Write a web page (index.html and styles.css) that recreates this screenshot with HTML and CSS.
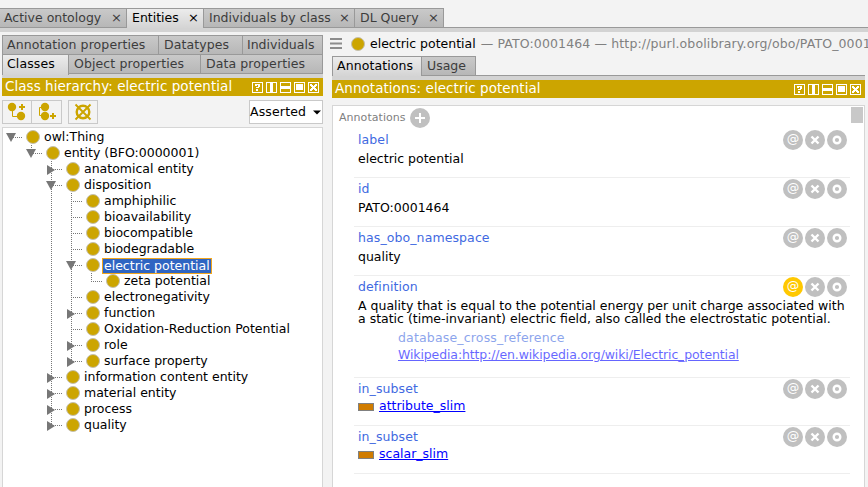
FILE: index.html
```html
<!DOCTYPE html>
<html lang="en">
<head>
<meta charset="utf-8">
<title>Class hierarchy</title>
<link rel="stylesheet" href="styles.css">
</head>
<body>
<svg class="defs" width="0" height="0" aria-hidden="true">
  <symbol id="ctl" viewBox="0 0 67 11">
    <g fill="none" stroke="#fff" shape-rendering="crispEdges">
      <path d="M.5.5h10v10H.5zM14.5.5h10v10h-10zM28.5.5h10v10h-10zM42.5.5h10v10h-10zM56.5.5h10v10h-10z"/>
    </g>
    <g fill="#fff" shape-rendering="crispEdges"><path d="M3 2h5v3H7v1H4V5h2V3H5v1H3zM4 7h2v2H4zM18 1h3v9h-3zM29 4h9v3h-9zM44 2h7v6h-7zM58 2h2v1h1v1h1V3h1V2h2v2h-1v1h-1v1h1v1h1v2h-2V8h-1V7h-1v1h-1v1h-2V7h1V6h1V5h-1V4h-1z"/></g>
  </symbol>
  <symbol id="down" viewBox="0 0 10 10"><path d="M0 0h10L5 9z" fill="#777"/></symbol>
  <symbol id="right" viewBox="0 0 10 10"><path d="M1 0l8 5-8 5z" fill="#777"/></symbol>
  <symbol id="ops" viewBox="0 0 64 20">
    <circle class="at" cx="10" cy="10" r="10"/><circle cx="32" cy="10" r="10" fill="#c0c0c0"/><circle cx="54" cy="10" r="10" fill="#c0c0c0"/>
    <path d="M28.5 6.5l7 7m0-7l-7 7" stroke="#fff" stroke-width="2.4"/>
    <circle cx="54" cy="10" r="3.3" fill="none" stroke="#fff" stroke-width="2.4"/>
  </symbol>
</svg>

<nav class="tabs main">
  <span class="tab w1">Active ontology<i>×</i></span><span class="tab on w2">Entities<i>×</i></span><span class="tab w3">Individuals by class<i>×</i></span><span class="tab w4">DL Query<i>×</i></span>
</nav>

<main>
  <section class="left">
    <div class="tabs r1"><span class="tab a1">Annotation properties</span><span class="tab a2">Datatypes</span><span class="tab a3">Individuals</span></div>
    <div class="tabs r2"><span class="tab on b1">Classes</span><span class="tab b2">Object properties</span><span class="tab b3">Data properties</span></div>
    <div class="title"><span>Class hierarchy: electric potential</span><svg width="67" height="11"><use href="#ctl"/></svg></div>
    <div class="tools">
      <span class="btn"><svg width="28" height="22"><g fill="#cca500"><circle cx="9" cy="6" r="4.2"/><circle cx="18" cy="15" r="4.2"/><path d="M16 5h2V3h2v2h2v2h-2v2h-2V7h-2z"/></g><path d="M9.5 10v5.5H14" fill="none" stroke="#cca500"/></svg></span>
      <span class="btn mid"><svg width="28" height="22"><g fill="#cca500"><circle cx="13" cy="6" r="4.2"/><circle cx="13" cy="15" r="4.2"/><path d="M18 14h2v-2h2v2h2v2h-2v2h-2v-2h-2z"/></g><path d="M10 6.500H7.500v8H10" fill="none" stroke="#cca500"/></svg></span>
      <span class="btn del"><svg width="28" height="22" fill="none" stroke="#cca500"><circle cx="14" cy="11" r="6.300" stroke-width="2.4"/><path d="M6.500 3.500l15 15m0-15l-15 15" stroke-width="1.900"/></svg></span>
      <span class="drop">Asserted<svg width="8" height="5"><path d="M0 .5h8L4 4.500z"/></svg></span>
    </div>
    <div class="tree">
      <ul>
        <li><div class="row"><svg class="h"><use href="#down"/></svg><b></b><span>owl:Thing</span></div>
        <ul>
          <li><div class="row"><svg class="h"><use href="#down"/></svg><b></b><span>entity (BFO:0000001)</span></div>
          <ul>
            <li><div class="row"><svg class="h"><use href="#right"/></svg><b></b><span>anatomical entity</span></div></li>
            <li><div class="row"><svg class="h"><use href="#down"/></svg><b></b><span>disposition</span></div>
            <ul>
              <li><div class="row"><b></b><span>amphiphilic</span></div></li>
              <li><div class="row"><b></b><span>bioavailability</span></div></li>
              <li><div class="row"><b></b><span>biocompatible</span></div></li>
              <li><div class="row"><b></b><span>biodegradable</span></div></li>
              <li><div class="row"><svg class="h"><use href="#down"/></svg><b></b><span class="sel">electric potential</span></div>
              <ul>
                <li><div class="row"><b></b><span>zeta potential</span></div></li>
              </ul></li>
              <li><div class="row"><b></b><span>electronegativity</span></div></li>
              <li><div class="row"><svg class="h"><use href="#right"/></svg><b></b><span>function</span></div></li>
              <li><div class="row"><b></b><span>Oxidation-Reduction Potential</span></div></li>
              <li><div class="row"><svg class="h"><use href="#right"/></svg><b></b><span>role</span></div></li>
              <li><div class="row"><svg class="h"><use href="#right"/></svg><b></b><span>surface property</span></div></li>
            </ul></li>
            <li><div class="row"><svg class="h"><use href="#right"/></svg><b></b><span>information content entity</span></div></li>
            <li><div class="row"><svg class="h"><use href="#right"/></svg><b></b><span>material entity</span></div></li>
            <li><div class="row"><svg class="h"><use href="#right"/></svg><b></b><span>process</span></div></li>
            <li><div class="row"><svg class="h"><use href="#right"/></svg><b></b><span>quality</span></div></li>
          </ul></li>
        </ul></li>
      </ul>
    </div>
  </section>

  <section class="right">
    <header><svg class="menu" width="12" height="11"><path d="M0 1h12M0 5.500h12M0 10h12" stroke="#8c8c8c" stroke-width="2"/></svg><b></b><span>electric potential</span><em>— PATO:0001464 — http://purl.obolibrary.org/obo/PATO_0001464</em></header>
    <div class="tabs r3"><span class="tab on c1">Annotations</span><span class="tab c2">Usage</span></div>
    <div class="title"><span>Annotations: electric potential</span><svg width="67" height="11"><use href="#ctl"/></svg></div>
    <div class="panel">
      <div class="content">
        <div class="head">Annotations<svg width="20" height="20"><circle cx="10" cy="10" r="10" fill="#c0c0c0"/><path d="M10 5v10M5 10h10" stroke="#fff" stroke-width="2"/></svg></div>
        <article><h3>label</h3><p>electric potential</p><div class="ops"><svg width="64" height="20"><use href="#ops"/></svg><span>@</span></div></article>
        <article><h3>id</h3><p>PATO:0001464</p><div class="ops"><svg width="64" height="20"><use href="#ops"/></svg><span>@</span></div></article>
        <article><h3>has_obo_namespace</h3><p>quality</p><div class="ops"><svg width="64" height="20"><use href="#ops"/></svg><span>@</span></div></article>
        <article class="def"><h3>definition</h3><p>A quality that is equal to the potential energy per unit charge associated with<br>a static (time-invariant) electric field, also called the electrostatic potential.</p>
          <div class="ref"><h4>database_cross_reference</h4><a>Wikipedia:http://en.wikipedia.org/wiki/Electric_potential</a></div>
          <div class="ops lit"><svg width="64" height="20"><use href="#ops"/></svg><span>@</span></div></article>
        <article class="sub"><h3>in_subset</h3><p><s></s><a>attribute_slim</a></p><div class="ops"><svg width="64" height="20"><use href="#ops"/></svg><span>@</span></div></article>
        <article class="sub"><h3>in_subset</h3><p><s></s><a>scalar_slim</a></p><div class="ops"><svg width="64" height="20"><use href="#ops"/></svg><span>@</span></div></article>
      </div>
      <div class="scroll"><div class="thumb"></div></div>
    </div>
  </section>
</main>
</body>
</html>
```
FILE: styles.css
```css
* { box-sizing: border-box; }
body { margin: 0; width: 868px; height: 487px; overflow: hidden; background: #f3f3f3; color: #000; font: 12.5px/16px "DejaVu Sans", sans-serif; }
svg { display: block; flex: none; }
.defs { position: absolute; }
ul { list-style: none; margin: 0; padding: 0; }

.tabs { display: flex; }
.tab { flex: none; height: 20px; padding-left: 5px; line-height: 18px; color: #3c3c3c; white-space: nowrap; background: linear-gradient(#c9c9c9, #b7b7b7); border: 1px solid #999; border-left-width: 0; display: flex; }
.tab.on { background: linear-gradient(#ececec, #d4d4d4); color: #000; border-bottom: 0; }
.tab i { font-style: normal; margin-left: auto; padding-right: 4px; font-size: 13px; }
.main { height: 32px; padding-top: 8px; background: linear-gradient(#f3f3f3 27px, #999 27px, #999 28px, #d3d3d3 28px); }
.w1 { width: 127px; padding-left: 4px; }
.w2 { width: 77px; }
.w3 { width: 151px; }
.w4 { width: 89px; }

main { display: flex; height: 455px; }
.left { width: 321px; margin-left: 2px; padding-top: 3px; display: flex; flex-direction: column; }
.r1 { height: 19px; letter-spacing: .1px; }
.r1 .tab:first-child, .r2 .tab:first-child, .r3 .tab:first-child { border-left-width: 1px; padding-left: 4px; }
.r2 { height: 24px; letter-spacing: .1px; background: linear-gradient(transparent 20px, #d3d3d3 20px); }
.r2 .on { height: 21px; }
.a1 { width: 157px; }
.a2 { width: 84px; }
.a3 { width: 80px; letter-spacing: 0; padding-left: 4px; }
.b1 { width: 67px; }
.b2 { width: 132px; }
.b3 { width: 122px; }
.title { height: 18px; background: #cca500; color: #fff; font-size: 13.5px; letter-spacing: .05px; line-height: 17px; padding: 0 4px 0 3px; display: flex; align-items: center; justify-content: space-between; }
.title span { height: 18px; }
.tools { display: flex; height: 31px; padding-top: 4px; }
.btn { width: 30px; height: 24px; border: 1px solid #c9c9c9; }
.mid { border-left: 0; }
.del { margin-left: 6px; }
.drop { margin-left: auto; width: 74px; height: 24px; border: 1px solid #c9c9c9; background: #fff; line-height: 22px; letter-spacing: .15px; display: flex; justify-content: space-between; padding-right: 1px; }
.drop svg { margin-top: 9px; }

.tree { flex: 1; background: #fff; border: 1px solid #d6d6d6; border-bottom: 0; padding: 1px 0 0 3px; }
.tree ul ul { margin-left: 20px; }
.tree li { position: relative; }
.tree ul ul > li::before { content: ""; position: absolute; left: 5px; top: 0; width: 1px; height: 100%; background: repeating-linear-gradient(#777 0 1px, transparent 1px 2px); }
.tree ul ul > li:last-child::before { height: 9px; }
.row { position: relative; height: 16px; display: flex; align-items: center; padding-left: 20px; background: repeating-linear-gradient(90deg, #777 0 1px, transparent 1px 2px) 5px 8px / 12px 1px no-repeat; }
.h { position: absolute; left: 0; top: 4px; width: 10px; height: 10px; }
b { flex: none; width: 14px; height: 14px; border-radius: 50%; background: #cca500; border: 1px solid #c4c0b0; }
.row span { margin-left: 3px; padding: 0 1px; line-height: 18px; white-space: nowrap; }
.row .sel { background: #2f65c2; color: #fff; box-shadow: 0 0 0 1px #f0a51e; line-height: 14px; margin-top: 1px; padding-right: 1px; }

.right { margin-left: 9px; width: 536px; display: flex; flex-direction: column; }
header { height: 24px; display: flex; align-items: center; white-space: nowrap; margin-left: -2px; padding-bottom: 1px; }
header b { margin: 0 5px 0 9px; }
header em { font-style: normal; color: #808080; margin-left: 5px; letter-spacing: .13px; }
.r3 { height: 24px; background: linear-gradient(transparent 19px, #999 19px, #999 20px, #d3d3d3 20px); width: 533px; }
.c1 { width: 90px; letter-spacing: .1px; }
.c2 { width: 54px; }
.right .title { width: 533px; }
.panel { margin-top: 7px; width: 533px; flex: 1; background: #fff; border: 1px solid #d6d6d6; border-bottom: 0; display: flex; justify-content: space-between; }
.content { width: 517px; padding-left: 6px; }
.scroll { width: 14px; padding: 1px 1px 0 1px; }
.thumb { height: 16px; width: 12px; background: #c8c8c8; }
.head { height: 23px; display: flex; align-items: center; font-size: 11px; color: #808080; padding-top: 1px; gap: 4px; letter-spacing: .05px; }
article { position: relative; height: 49px; margin-left: 15px; width: 496px; padding: 2px 0 0 4px; border-bottom: 1px solid #eee; }
h3, h4, p { margin: 0; font-size: inherit; font-weight: normal; }
h3 { color: #4169e1; line-height: 18px; letter-spacing: .1px; }
p { line-height: 19px; white-space: nowrap; }
.def { height: 102px; }
.def p { line-height: 13px; padding-top: 3px; }
.ref { margin: 4px 0 0 40px; opacity: .6; line-height: 17px; }
.ref h4 { color: #4169e1; letter-spacing: .17px; }
.ref a { letter-spacing: -.12px; }
a { color: #00f; text-decoration: underline; }
.sub { height: 48px; }
.sub p { display: flex; align-items: center; gap: 5px; line-height: 16px; }
s { width: 16px; height: 8px; background: #d07c00; border: 1px solid #808080; margin-top: 2px; }
.ops { position: absolute; right: 3px; top: 1px; --at: #c0c0c0; }
.ops span { position: absolute; left: 0; top: 0; width: 20px; text-align: center; color: #fff; font-size: 12.5px; line-height: 18px; }
.at { fill: var(--at); }
.lit { --at: #ffc800; }
```
